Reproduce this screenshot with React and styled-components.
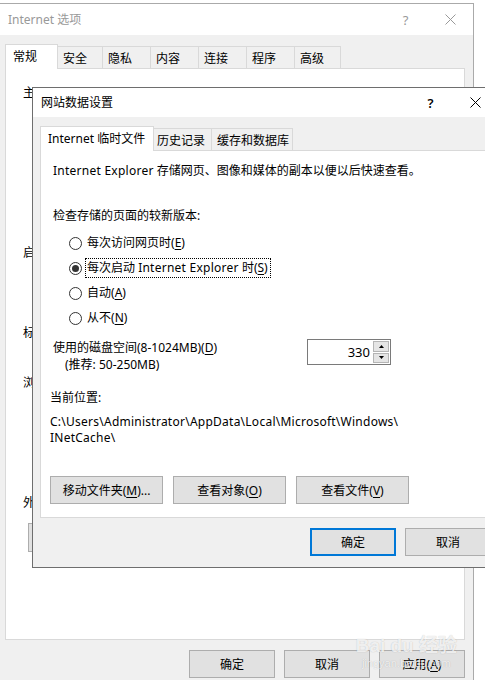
import React from 'react';
import styled, { createGlobalStyle } from 'styled-components';

const GlobalStyle = createGlobalStyle`
  html, body {
    margin: 0;
    padding: 0;
    background: #ffffff;
    overflow: hidden;
  }
  body {
    font-family: "Noto Sans", "Noto Sans CJK SC", sans-serif;
    font-size: 12px;
    color: #000000;
  }
  * { box-sizing: border-box; }
`

const Screen = styled.div`
  position: relative;
  width: 485px;
  height: 680px;
  overflow: hidden;
  padding-top: 3px;
`

const OuterWindow = styled.div`
  margin-left: -1px;
  width: 475px;
  height: 677px;
  border: 1px solid #aaaaaa;
  border-bottom: none;
  background: #f0f0f0;
  display: flex;
  flex-direction: column;
`

const Dialog = styled.div`
  position: absolute;
  left: 32px;
  top: 87px;
  width: 467px;
  height: 481px;
  border: 1px solid #6e6e6e;
  background: #f0f0f0;
  display: flex;
  flex-direction: column;
  z-index: 2;
`

const TitleBar = styled.div`
  height: ${p => p.$h}px;
  flex: none;
  background: #ffffff;
  display: flex;
  align-items: center;
  padding-left: 8px;
  color: ${p => p.$inactive ? '#999999' : '#000000'};
`

const TitleText = styled.div`
  flex: 1;
  line-height: 16px;
`

const CtrlButton = styled.div`
  width: 45px;
  height: 100%;
  display: flex;
  align-items: center;
  justify-content: center;
  font-size: 13px;
  font-weight: ${p => p.$bold ? 600 : 400};
`

const Body = styled.div`
  flex: 1;
  display: flex;
  flex-direction: column;
  padding: 9px ${p => p.$pr}px 0 ${p => p.$pl}px;
`

const TabStrip = styled.div`
  display: flex;
  align-items: flex-end;
`

const Tab = styled.div`
  width: ${p => p.$w}px;
  height: ${p => p.$active ? 25 : 23}px;
  margin-bottom: -1px;
  margin-left: ${p => p.$first ? 0 : -1}px;
  border: 1px solid #d9d9d9;
  border-bottom: none;
  background: ${p => p.$active ? '#ffffff' : '#f0f0f0'};
  position: ${p => p.$active ? 'relative' : 'static'};
  z-index: ${p => p.$active ? 1 : 'auto'};
  display: flex;
  align-items: center;
  padding-left: ${p => p.$pad}px;
  padding-bottom: ${p => p.$active ? 2 : 1}px;
  white-space: nowrap;
`

const Panel = styled.div`
  height: ${p => p.$h}px;
  flex: none;
  border: 1px solid #d9d9d9;
  background: #ffffff;
  display: flex;
  flex-direction: column;
`

const ButtonRow = styled.div`
  display: flex;
  justify-content: ${p => p.$start ? 'flex-start' : 'flex-end'};
  gap: ${p => p.$gap}px;
  margin-top: ${p => p.$mt}px;
  padding: 0 ${p => p.$pr || 0}px 0 ${p => p.$pl || 0}px;
`

const Button = styled.div`
  width: ${p => p.$w}px;
  height: 28px;
  background: #e1e1e1;
  border: ${p => p.$default ? '2px solid #0078d7' : '1px solid #adadad'};
  display: flex;
  align-items: center;
  justify-content: center;
  white-space: nowrap;
`

const U = styled.span`
  text-decoration: underline;
  text-underline-offset: 2px;
`

// latin runs are a touch wider in the original UI font
const Latin = styled.span`
  letter-spacing: 0.25px;
`

/* outer window: bits of text peeking out from under the dialog */
const Peek = styled.div`
  display: flex;
  flex-direction: column;
  align-items: flex-start;
  padding-left: 17px;
`

const PeekChar = styled.div`
  line-height: 14px;
  margin-top: ${p => p.$mt}px;
`

const PeekButton = styled.div`
  width: 100px;
  height: 29px;
  margin-top: 13px;
  margin-left: 5px;
  background: #e1e1e1;
  border: 1px solid #adadad;
`

/* dialog panel content */
const Line = styled.div`
  line-height: 16px;
  white-space: nowrap;
  margin-top: ${p => p.$mt || 0}px;
  padding-left: ${p => p.$pl || 0}px;
`

const RadioGroup = styled.div`
  display: flex;
  flex-direction: column;
  gap: 5px;
  margin-top: 9px;
  padding-left: 28px;
`

const RadioRow = styled.div`
  height: 20px;
  display: flex;
  align-items: center;
`

const RadioCircle = styled.span`
  width: 13px;
  height: 13px;
  border-radius: 50%;
  border: 1px solid #333333;
  background: #ffffff;
  display: flex;
  align-items: center;
  justify-content: center;
  flex: none;
  &::after {
    content: '';
    width: 7px;
    height: 7px;
    border-radius: 50%;
    background: ${p => p.$checked ? '#333333' : 'transparent'};
  }
`

const RadioLabel = styled.span`
  display: block;
  height: 20px;
  line-height: 18px;
  margin-left: 3px;
  padding: 0 2px 0 1px;
  border: 1px dotted ${p => p.$focus ? '#000000' : 'transparent'};
  white-space: nowrap;
`

const DiskRow = styled.div`
  display: flex;
  align-items: flex-start;
  margin-top: 12px;
  padding-left: 12px;
`

const DiskText = styled.div`
  width: 254px;
`

const Spinner = styled.div`
  width: 84px;
  height: 26px;
  margin-top: -1px;
  border: 1px solid #7a7a7a;
  display: flex;
  background: #ffffff;
`

const SpinValue = styled.div`
  flex: 1;
  display: flex;
  align-items: center;
  justify-content: flex-end;
  padding-right: 3px;
  font-size: 13px;
`

const SpinButtons = styled.div`
  width: 17px;
  display: flex;
  flex-direction: column;
  gap: 1px;
  padding: 1px 1px 1px 0;
`

const SpinButton = styled.div`
  flex: 1;
  background: #e5e5e5;
  border: 1px solid #b5b5b5;
  display: flex;
  align-items: center;
  justify-content: center;
`

const Watermark = styled.div`
  position: absolute;
  right: 28px;
  bottom: 10px;
  display: flex;
  flex-direction: column;
  align-items: center;
  color: rgba(255, 255, 255, 0.8);
  text-shadow: 0 0 1px rgba(0, 0, 0, 0.25);
  pointer-events: none;
  z-index: 3;
`

const WatermarkBig = styled.div`
  font-family: "Liberation Sans", "Noto Sans CJK SC", sans-serif;
  font-size: 19px;
  font-weight: 700;
  line-height: 22px;
`

const WatermarkSmall = styled.div`
  font-family: "Liberation Sans", sans-serif;
  font-size: 11px;
  line-height: 13px;
`

const CloseIcon = ({ color }) => (
  <svg width="11" height="11" viewBox="0 0 11 11">
    <path d="M0.5 0.5 L10.5 10.5 M10.5 0.5 L0.5 10.5" stroke={color} strokeWidth="1" fill="none" />
  </svg>
)

const Arrow = ({ up }) => (
  <svg width="5" height="3" viewBox="0 0 5 3">
    <path d={up ? 'M0 3 L2.5 0 L5 3 Z' : 'M0 0 L5 0 L2.5 3 Z'} fill="#000000" />
  </svg>
)

const outerTabs = [
  { label: '常规', w: 53, active: true },
  { label: '安全', w: 46 },
  { label: '隐私', w: 49 },
  { label: '内容', w: 49 },
  { label: '连接', w: 49 },
  { label: '程序', w: 49 },
  { label: '高级', w: 47 },
]

const dialogTabs = [
  { label: 'Internet 临时文件', w: 114, active: true, pad: 7 },
  { label: '历史记录', w: 59, pad: 3 },
  { label: '缓存和数据库', w: 82, pad: 5 },
]

const radios = [
  { text: '每次访问网页时', key: 'E' },
  { text: <>每次启动{' '}<Latin>Internet Explorer</Latin>{' '}时</>, key: 'S', checked: true },
  { text: '自动', key: 'A' },
  { text: '从不', key: 'N' },
]

export default function App() {
  return (
    <Screen>
      <GlobalStyle />
      <OuterWindow>
        <TitleBar $h={31} $inactive>
          <TitleText>Internet 选项</TitleText>
          <CtrlButton>?</CtrlButton>
          <CtrlButton><CloseIcon color="#999999" /></CtrlButton>
        </TitleBar>
        <Body $pl={5} $pr={8}>
          <TabStrip>
            {outerTabs.map((t, i) => (
              <Tab key={t.label} $w={t.w} $active={t.active} $first={i === 0} $pad={t.active ? 7 : 5}>
                {t.label}
              </Tab>
            ))}
          </TabStrip>
          <Panel $h={572}>
            <Peek>
              <PeekChar $mt={17}>主</PeekChar>
              <PeekChar $mt={146}>启</PeekChar>
              <PeekChar $mt={66}>标</PeekChar>
              <PeekChar $mt={36}>浏</PeekChar>
              <PeekChar $mt={106}>外</PeekChar>
              <PeekButton />
            </Peek>
          </Panel>
          <ButtonRow $mt={10} $gap={9} $pr={0}>
            <Button $w={86}>确定</Button>
            <Button $w={86}>取消</Button>
            <Button $w={86}>应用(<U>A</U>)</Button>
          </ButtonRow>
        </Body>
      </OuterWindow>

      <Dialog>
        <TitleBar $h={29}>
          <TitleText>网站数据设置</TitleText>
          <CtrlButton $bold>?</CtrlButton>
          <CtrlButton><CloseIcon color="#000000" /></CtrlButton>
        </TitleBar>
        <Body $pl={7} $pr={7}>
          <TabStrip>
            {dialogTabs.map((t, i) => (
              <Tab key={t.pad} $w={t.w} $active={t.active} $first={i === 0} $pad={t.pad}>
                {t.label}
              </Tab>
            ))}
          </TabStrip>
          <Panel $h={368}>
            <Line $mt={12} $pl={12}>
              <Latin>Internet Explorer</Latin> 存储网页、图像和媒体的副本以便以后快速查看。
            </Line>
            <Line $mt={29} $pl={12}>检查存储的页面的较新版本:</Line>
            <RadioGroup>
              {radios.map(r => (
                <RadioRow key={r.key}>
                  <RadioCircle $checked={r.checked} />
                  <RadioLabel $focus={r.checked}>
                    {r.text}(<U>{r.key}</U>)
                  </RadioLabel>
                </RadioRow>
              ))}
            </RadioGroup>
            <DiskRow>
              <DiskText>
                <Line>使用的磁盘空间(8-1024MB)(<U>D</U>)</Line>
                <Line $mt={1} $pl={12}>(推荐: 50-250MB)</Line>
              </DiskText>
              <Spinner>
                <SpinValue>330</SpinValue>
                <SpinButtons>
                  <SpinButton><Arrow up /></SpinButton>
                  <SpinButton><Arrow /></SpinButton>
                </SpinButtons>
              </Spinner>
            </DiskRow>
            <Line $mt={17} $pl={9}>当前位置:</Line>
            <Line $mt={8} $pl={9}>
              <Latin>C:\Users\Administrator\AppData\Local\Microsoft\Windows\</Latin>
              <br />
              <Latin>INetCache\</Latin>
            </Line>
            <ButtonRow $start $mt={30} $gap={10} $pl={9}>
              <Button $w={113}>移动文件夹(<U>M</U>)...</Button>
              <Button $w={113}>查看对象(<U>O</U>)</Button>
              <Button $w={113}>查看文件(<U>V</U>)</Button>
            </ButtonRow>
          </Panel>
          <ButtonRow $mt={10} $gap={9} $pr={0}>
            <Button $w={86} $default>确定</Button>
            <Button $w={86}>取消</Button>
          </ButtonRow>
        </Body>
      </Dialog>

      <Watermark>
        <WatermarkBig>Bai du 经验</WatermarkBig>
        <WatermarkSmall>jingyan.baidu.com</WatermarkSmall>
      </Watermark>
    </Screen>
  )
}
